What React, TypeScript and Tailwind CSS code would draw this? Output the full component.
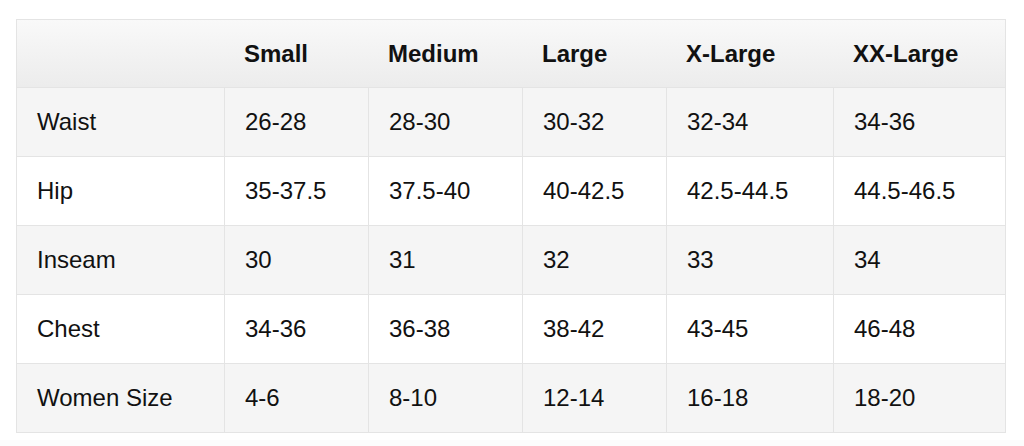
import React from "react";

const SIZES = ["Small", "Medium", "Large", "X-Large", "XX-Large"];

const ROWS: { label: string; values: string[] }[] = [
  { label: "Waist", values: ["26-28", "28-30", "30-32", "32-34", "34-36"] },
  { label: "Hip", values: ["35-37.5", "37.5-40", "40-42.5", "42.5-44.5", "44.5-46.5"] },
  { label: "Inseam", values: ["30", "31", "32", "33", "34"] },
  { label: "Chest", values: ["34-36", "36-38", "38-42", "43-45", "46-48"] },
  { label: "Women Size", values: ["4-6", "8-10", "12-14", "16-18", "18-20"] },
];

const GRID = "grid grid-cols-[207px_144px_154px_144px_167px_172px]";

const App: React.FC = () => {
  return (
    <div
      className="w-[1024px] h-[446px] bg-white overflow-hidden flex flex-col"
      style={{ fontFamily: '"Liberation Sans", Arial, sans-serif' }}
    >
      <div className="pt-[19px] pl-[16px]">
        <div className="w-[990px] border border-[#e4e4e4] text-[24px] text-[#111]">
          {/* 表头 */}
          <div className={`${GRID} h-[67px] bg-gradient-to-b from-[#f9f9f9] to-[#ececec]`}>
            <div />
            {SIZES.map((s) => (
              <div key={s} className="flex items-center pl-[20px] font-bold">
                {s}
              </div>
            ))}
          </div>

          {/* 数据行 */}
          {ROWS.map((row, i) => (
            <div
              key={row.label}
              className={`${GRID} h-[69px] border-t border-[#e4e4e4] ${
                i % 2 === 0 ? "bg-[#f5f5f5]" : "bg-white"
              }`}
            >
              <div className="flex items-center pl-[20px]">{row.label}</div>
              {row.values.map((v, j) => (
                <div key={j} className="flex items-center pl-[20px] border-l border-[#e4e4e4]">
                  {v}
                </div>
              ))}
            </div>
          ))}
        </div>
      </div>
      <div className="mt-[7px] flex-1 bg-[#fcfcfc]" />
    </div>
  );
};

export default App;
